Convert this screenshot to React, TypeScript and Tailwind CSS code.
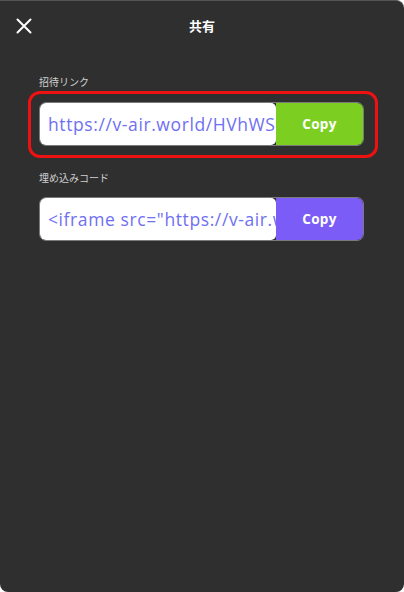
import React from "react";

function CopyField({ text, color, btn }: { text: string; color: string; btn: string }) {
  return (
    <div className={`flex h-[44px] w-[325px] rounded-[7px] border border-[#7a7a7a] overflow-hidden`}>
      <div className="flex-1 min-w-0 bg-white rounded-r-[5px] flex items-center pl-[8px] overflow-hidden whitespace-nowrap">
        <span className={`text-[17.5px] ${color}`} style={{ fontFamily: "'Open Sans', 'Liberation Sans', sans-serif", letterSpacing: "0.6px" }}>{text}</span>
      </div>
      <div className={`w-[87px] shrink-0 flex items-center justify-center ${btn}`}>
        <span className="text-white text-[13.5px] font-bold" style={{ fontFamily: "'Open Sans', 'Liberation Sans', sans-serif", letterSpacing: "0.3px" }}>Copy</span>
      </div>
    </div>
  );
}

export default function App() {
  return (
    <div className="w-[404px] h-[592px] bg-white">
      <div
        className="w-[404px] h-[592px] bg-[#2f2f2f] rounded-tr-[8px] rounded-b-[8px] border-t border-[#555555] flex flex-col"
        style={{ fontFamily: "'Noto Sans CJK JP', 'Noto Sans', sans-serif" }}
      >
        <div className="relative h-[49px] flex items-center justify-center">
          <svg className="absolute left-[16px] top-[17px]" width="16" height="16" viewBox="0 0 16 16">
            <path d="M1.5 1.5 L14.5 14.5 M14.5 1.5 L1.5 14.5" stroke="#ffffff" strokeWidth="2" strokeLinecap="round" />
          </svg>
          <span className="text-white text-[13px] font-bold">共有</span>
        </div>
        <div className="pl-[39px] flex flex-col">
          <div className="mt-[26px] text-[10px] leading-[12px] text-[#d0d0d0]">招待リンク</div>
          <div className="relative mt-[14px]">
            <CopyField text="https://v-air.world/HVhWS8xYz" color="text-[#6f6ff2]" btn="bg-[#7ccf21]" />
            <div className="absolute left-[-11px] top-[-11px] w-[350px] h-[67px] border-[3px] border-[#ee1111] rounded-[12px] pointer-events-none" />
          </div>
          <div className="mt-[26px] text-[10px] leading-[12px] text-[#d0d0d0]">埋め込みコード</div>
          <div className="mt-[13px]">
            <CopyField text={'<iframe src="https://v-air.world/HVhWS8xYz"></iframe>'} color="text-[#6f6ff2]" btn="bg-[#7b5cf6]" />
          </div>
        </div>
      </div>
    </div>
  );
}
